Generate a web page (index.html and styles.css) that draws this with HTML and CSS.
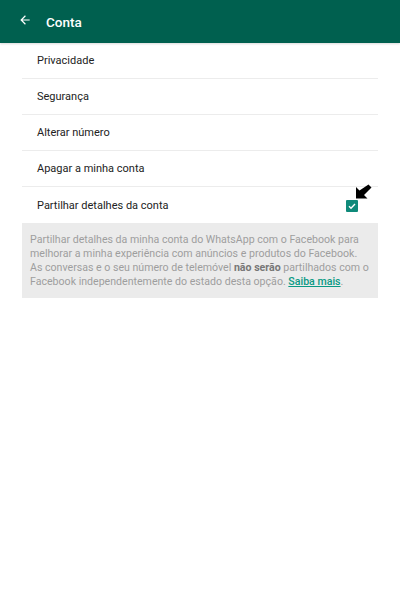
FILE: index.html
```html
<!DOCTYPE html>
<html>
  <head>
    <meta charset="UTF-8" />
    <title>Conta</title>
    <link rel="stylesheet" href="styles.css">
  </head>
  <body>
    <header class="topbar">
      <svg class="back" width="14" height="14" viewBox="0 0 24 24">
        <path d="M20 11H7.83l5.59-5.59L12 4l-8 8 8 8 1.41-1.41L7.83 13H20v-2z" fill="#fff" />
      </svg>
      <h1>Conta</h1>
    </header>

    <ul class="menu">
      <li>Privacidade</li>
      <li>Segurança</li>
      <li>Alterar número</li>
      <li>Apagar a minha conta</li>
      <li class="check-row">
        <span>Partilhar detalhes da conta</span>
        <span class="box">
          <svg width="12" height="12" viewBox="0 0 12 12">
            <rect width="12" height="12" rx="1" fill="#0f8a7a" />
            <path d="M3 6.2l2 2 4-4.2" stroke="#fff" stroke-width="1.4" fill="none" />
          </svg>
          <svg class="pointer" width="17" height="17" viewBox="0 0 17 17">
            <path d="M13.5 0.5l3 3-7.5 7.5 3.5 3.5H1V3l3.5 3.5z" fill="#000" />
          </svg>
        </span>
      </li>
    </ul>

    <p class="note">
      Partilhar detalhes da minha conta do WhatsApp com o Facebook para
      melhorar a minha experiência com anúncios e produtos do Facebook.
      As conversas e o seu número de telemóvel <b>não serão</b> partilhados com o
      Facebook independentemente do estado desta opção. <a href="#">Saiba mais</a>.
    </p>
  </body>
</html>
```

FILE: styles.css
```css
body {
  margin: 0;
  font-family: Roboto, "Liberation Sans", sans-serif;
  background: #fff;
}
.topbar {
  height: 43px;
  background: #00604f;
  display: flex;
  align-items: center;
  padding-left: 18px;
  box-shadow: 0 1px 2px rgba(0, 0, 0, 0.15);
}
.topbar .back {
  margin-right: 14px;
  margin-top: -4px;
}
.topbar h1 {
  margin: 0;
  color: #fff;
  font-size: 13.5px;
  font-weight: 500;
}
.menu {
  list-style: none;
  margin: 0 22px;
  padding: 0;
}
.menu li {
  height: 35px;
  display: flex;
  align-items: center;
  padding-left: 15px;
  font-size: 11px;
  color: #222;
  border-bottom: 1px solid #ececec;
}
.menu li:last-child {
  border-bottom: none;
  padding-top: 1px;
}
.check-row {
  justify-content: space-between;
}
.box {
  position: relative;
  margin-right: 20px;
  height: 12px;
}
.pointer {
  position: absolute;
  left: 9px;
  top: -16px;
}
.note {
  margin: 0 22px;
  padding: 10px 8px 9px 8px;
  background: #ebebeb;
  color: #9e9e9e;
  font-size: 10.6px;
  line-height: 14px;
}
.note b {
  color: #777;
}
.note a {
  color: #0a9a84;
  font-weight: 500;
}
```
